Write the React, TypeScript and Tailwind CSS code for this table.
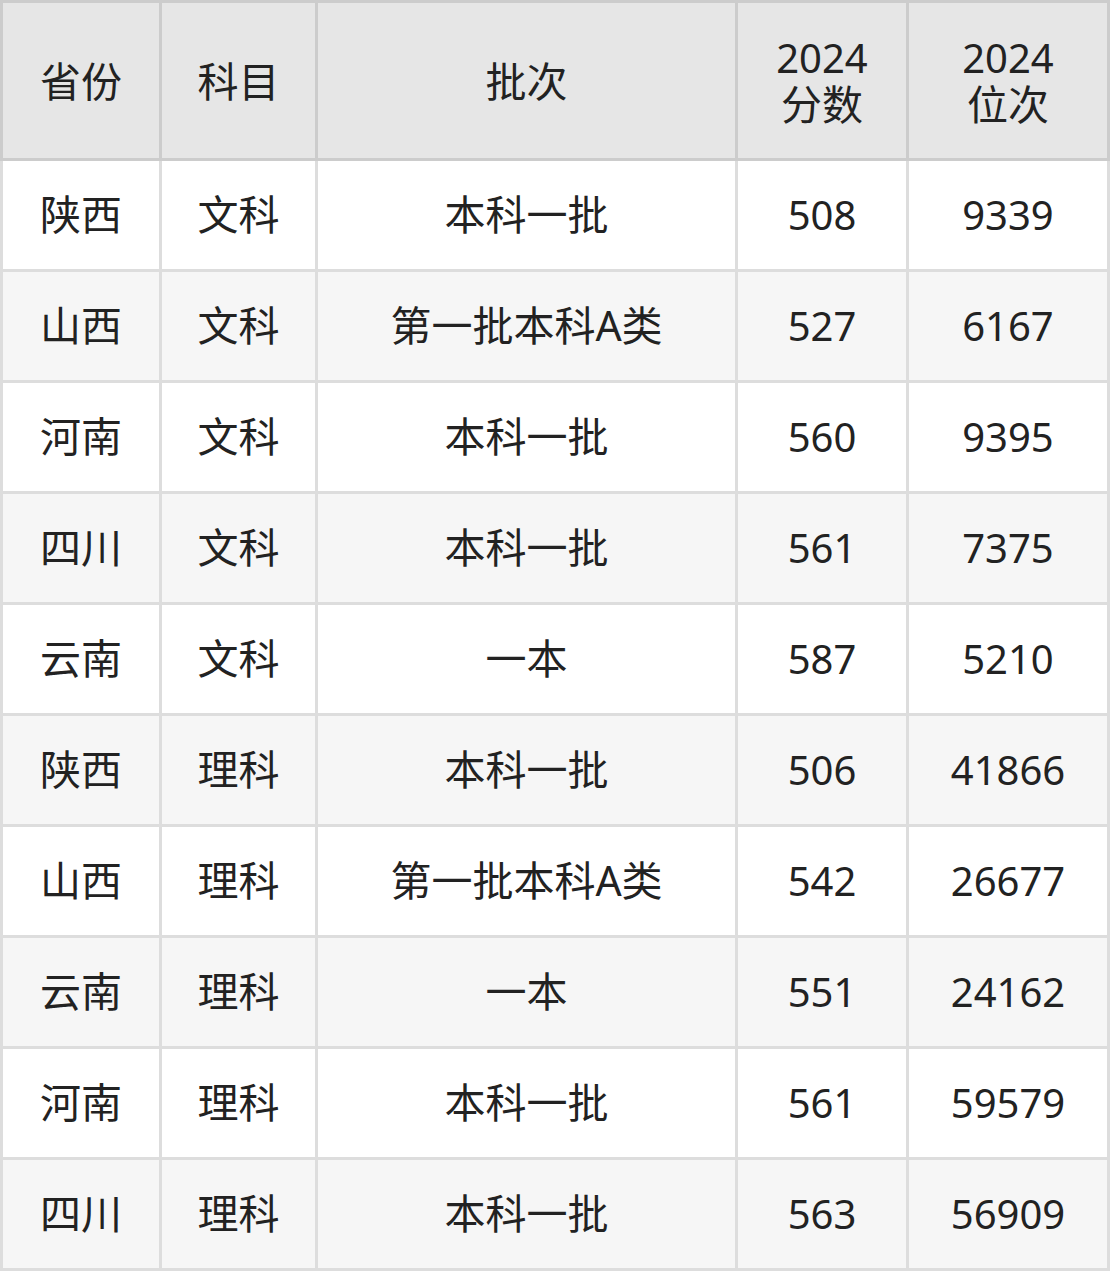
const rows: string[][] = [
  ["陕西", "文科", "本科一批", "508", "9339"],
  ["山西", "文科", "第一批本科A类", "527", "6167"],
  ["河南", "文科", "本科一批", "560", "9395"],
  ["四川", "文科", "本科一批", "561", "7375"],
  ["云南", "文科", "一本", "587", "5210"],
  ["陕西", "理科", "本科一批", "506", "41866"],
  ["山西", "理科", "第一批本科A类", "542", "26677"],
  ["云南", "理科", "一本", "551", "24162"],
  ["河南", "理科", "本科一批", "561", "59579"],
  ["四川", "理科", "本科一批", "563", "56909"],
];

const widths = ["w-[159px]", "w-[156px]", "w-[420px]", "w-[171px]", "w-[201px]"];

// CJK glyphs in the reference run a touch larger than the digits
const isNum = (s: string) => /^\d+$/.test(s);

export default function App() {
  return (
    <div
      className="w-[1110px] bg-white text-[#222222] text-[40px]"
      style={{ fontFamily: '"Noto Sans", "Noto Sans CJK SC", sans-serif' }}
    >
      {/* Header */}
      <div className="flex border-l-[3px] border-t-[3px] border-[#cccccc] bg-[#e6e6e6]">
        {[["省份"], ["科目"], ["批次"], ["2024", "分数"], ["2024", "位次"]].map((lines, i) => (
          <div
            key={i}
            className={`${widths[i]} h-[158px] shrink-0 flex flex-col items-center justify-center border-r-[3px] border-b-[3px] border-[#cccccc] leading-[46px]`}
          >
            {lines.map((l) => (
              <span key={l} className={isNum(l) ? "text-[40px]" : "text-[41px]"}>
                {l}
              </span>
            ))}
          </div>
        ))}
      </div>

      {/* Body */}
      {rows.map((row, r) => (
        <div
          key={r}
          className={`flex border-l-[3px] border-[#dddddd] ${r % 2 === 0 ? "bg-white" : "bg-[#f6f6f6]"}`}
        >
          {row.map((cell, i) => (
            <div
              key={i}
              className={`${widths[i]} h-[111px] shrink-0 flex items-center justify-center border-r-[3px] border-b-[3px] border-[#dddddd] ${
                isNum(cell) ? "text-[40px]" : "text-[41px]"
              }`}
            >
              {cell}
            </div>
          ))}
        </div>
      ))}
    </div>
  );
}
